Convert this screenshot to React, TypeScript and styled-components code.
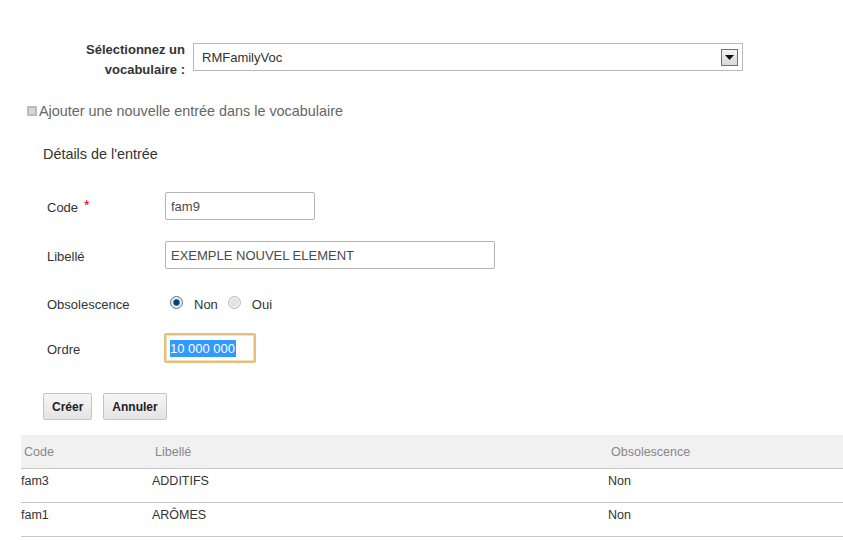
import React from 'react';
import styled, { createGlobalStyle } from 'styled-components';

const GlobalStyle = createGlobalStyle`
  body {
    margin: 0;
    background: #fff;
    font-family: "Liberation Sans", Arial, sans-serif;
    color: #333;
  }
`;

const Page = styled.div`
  width: 843px;
  height: 540px;
  overflow: hidden;
  padding-top: 40px;
  box-sizing: border-box;
`;

const VocRow = styled.div`
  display: flex;
  align-items: flex-start;
  gap: 8px;
`;

const VocLabel = styled.div`
  width: 185px;
  text-align: right;
  font-weight: bold;
  font-size: 13px;
  line-height: 20px;
  color: #333;
`;

const SelectBox = styled.div`
  margin-top: 3px;
  width: 550px;
  height: 28px;
  box-sizing: border-box;
  border: 1px solid #b8b8b8;
  display: flex;
  align-items: center;
  justify-content: space-between;
  padding: 0 4px 0 8px;
  font-size: 13px;
  color: #333;
`;

const ArrowButton = styled.div`
  width: 17px;
  height: 17px;
  box-sizing: border-box;
  border: 1px solid #707070;
  background: linear-gradient(#f4f4f4, #d8d8d8);
  display: flex;
  align-items: center;
  justify-content: center;
`;

const Toggle = styled.div`
  margin: 22px 0 0 27px;
  display: flex;
  align-items: center;
  gap: 2px;
  font-size: 14.4px;
  color: #666;
  line-height: 18px;
`;

const Section = styled.div`
  padding-left: 43px;
`;

const SectionTitle = styled.div`
  margin-top: 25px;
  font-size: 14.4px;
  color: #333;
  line-height: 18px;
`;

const Form = styled.div`
  display: flex;
  flex-direction: column;
`;

const FieldRow = styled.div<{ $top: number }>`
  display: flex;
  align-items: center;
  height: 28px;
  margin-top: ${p => p.$top}px;
`;

const FieldLabel = styled.div`
  width: 122px;
  box-sizing: border-box;
  padding: 3px 0 0 4px;
  font-size: 13px;
  color: #333;
  display: flex;
  align-items: center;
  gap: 6px;
`;

const Required = styled.span`
  color: #c00;
  font-size: 14px;
  position: relative;
  top: -3px;
`;

const TextInput = styled.div<{ $w: number }>`
  width: ${p => p.$w}px;
  height: 28px;
  box-sizing: border-box;
  border: 1px solid #b4b4b4;
  border-radius: 2px;
  display: flex;
  align-items: center;
  padding-left: 5px;
  font-size: 13px;
  color: #4a4a4a;
`;

const FocusInput = styled(TextInput)`
  margin-left: -1px;
  height: 30px;
  border: 2px solid #e3c17a;
  padding-left: 4px;
  box-shadow: inset 0 0 0 1px #f0e0b8;
`;

const Selected = styled.span`
  background: #3399ff;
  color: #fff;
  line-height: 17px;
  padding-right: 1px;
`;

const RadioGroup = styled.div`
  display: flex;
  align-items: center;
  padding: 2px 0 0 5px;
  font-size: 13px;
  color: #333;
`;

const Radio = styled.span<{ $checked?: boolean }>`
  width: 13px;
  height: 13px;
  border-radius: 50%;
  box-sizing: border-box;
  border: 1px solid ${p => (p.$checked ? '#5a6f80' : '#b8b8b8')};
  background: ${p =>
    p.$checked
      ? 'radial-gradient(circle, #0d3f6a 0 2.5px, #2f86c9 3px, #e8eef3 4px, #f2f2f2 6px)'
      : 'radial-gradient(circle, #e2e2e2 0 3px, #f6f6f6 6px)'};
  margin: -4px 11px 0 0;
`;

const RadioText = styled.span`
  margin-right: 10px;
`;

const Buttons = styled.div`
  margin-top: 31px;
  display: flex;
  gap: 11px;
`;

const Button = styled.div`
  height: 27px;
  box-sizing: border-box;
  padding: 0 8px;
  border: 1px solid #c4c4c4;
  border-radius: 2px;
  background: linear-gradient(#f6f6f6, #e4e4e4);
  display: flex;
  align-items: center;
  font-weight: bold;
  font-size: 12px;
  color: #222;
`;

const Table = styled.div`
  margin: 15px 0 0 21px;
`;

const Row = styled.div<{ $head?: boolean }>`
  display: grid;
  grid-template-columns: 131px 456px 1fr;
  height: 34px;
  box-sizing: border-box;
  border-bottom: 1px solid #c8c8c8;
  background: ${p => (p.$head ? '#f1f1f1' : 'transparent')};
  font-size: 12.5px;
  color: ${p => (p.$head ? '#888' : '#333')};
  align-items: ${p => (p.$head ? 'center' : 'start')};
  padding-top: ${p => (p.$head ? '0' : '5px')};
`;

const Cell = styled.div<{ $head?: boolean }>`
  padding-left: ${p => (p.$head ? '3px' : '0')};
`;

const CollapseIcon = () => (
  <svg width="10" height="10" viewBox="0 0 10 10">
    <rect x="0" y="0" width="10" height="10" fill="#bdbdbd" />
    <rect x="2" y="2.5" width="6" height="1" fill="#f0f0f0" />
    <rect x="2" y="4.5" width="6" height="1" fill="#f0f0f0" />
    <rect x="2" y="6.5" width="6" height="1" fill="#f0f0f0" />
  </svg>
);

const rows = [
  { code: 'fam3', label: 'ADDITIFS', obs: 'Non' },
  { code: 'fam1', label: 'ARÔMES', obs: 'Non' },
];

const App: React.FC = () => {
  return (
    <Page>
      <GlobalStyle />
      <VocRow>
        <VocLabel>
          Sélectionnez un
          <br />
          vocabulaire :
        </VocLabel>
        <SelectBox>
          RMFamilyVoc
          <ArrowButton>
            <svg width="9" height="5" viewBox="0 0 9 5">
              <path d="M0 0H9L4.5 5Z" fill="#111" />
            </svg>
          </ArrowButton>
        </SelectBox>
      </VocRow>
      <Toggle>
        <CollapseIcon />
        Ajouter une nouvelle entrée dans le vocabulaire
      </Toggle>
      <Section>
        <SectionTitle>Détails de l'entrée</SectionTitle>
        <Form>
          <FieldRow $top={29}>
            <FieldLabel>
              Code <Required>*</Required>
            </FieldLabel>
            <TextInput $w={150}>fam9</TextInput>
          </FieldRow>
          <FieldRow $top={21}>
            <FieldLabel>Libellé</FieldLabel>
            <TextInput $w={330}>EXEMPLE NOUVEL ELEMENT</TextInput>
          </FieldRow>
          <FieldRow $top={20}>
            <FieldLabel>Obsolescence</FieldLabel>
            <RadioGroup>
              <Radio $checked />
              <RadioText>Non</RadioText>
              <Radio />
              <RadioText>Oui</RadioText>
            </RadioGroup>
          </FieldRow>
          <FieldRow $top={17}>
            <FieldLabel>Ordre</FieldLabel>
            <FocusInput $w={92}>
              <Selected>10 000 000</Selected>
            </FocusInput>
          </FieldRow>
        </Form>
        <Buttons>
          <Button>Créer</Button>
          <Button>Annuler</Button>
        </Buttons>
      </Section>
      <Table>
        <Row $head>
          <Cell $head>Code</Cell>
          <Cell $head>Libellé</Cell>
          <Cell $head>Obsolescence</Cell>
        </Row>
        {rows.map(r => (
          <Row key={r.code}>
            <Cell>{r.code}</Cell>
            <Cell>{r.label}</Cell>
            <Cell>{r.obs}</Cell>
          </Row>
        ))}
      </Table>
    </Page>
  );
};

export default App;
